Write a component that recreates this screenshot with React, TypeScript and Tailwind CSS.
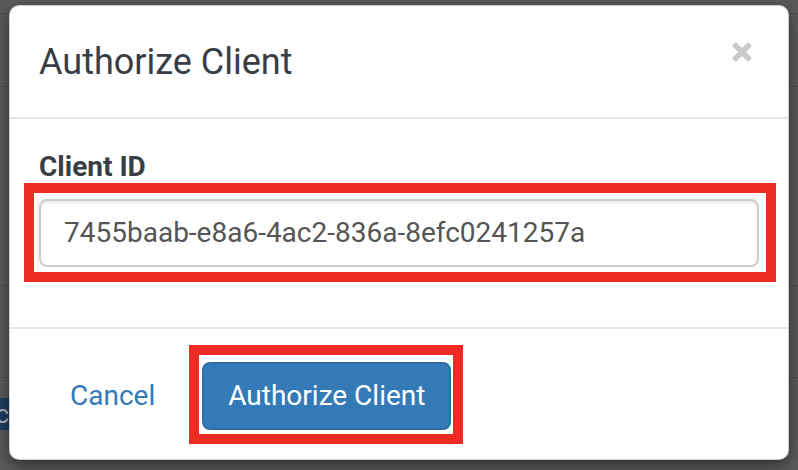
const font = { fontFamily: 'Roboto, "Liberation Sans", sans-serif' }

const BackgroundPage = () => (
  <div className="flex h-full flex-col">
    <div className="h-[14px] border-b border-[#4e4e4e]" />
    <div className="h-[73px] border-b border-[#4e4e4e]" />
    <div className="h-[199px] border-b border-[#4e4e4e]" />
    <div className="h-[92px] border-b border-[#4e4e4e]" />
    <div className="flex-1 pt-[20px]">
      <div className="flex h-[32px] w-[9px] items-center justify-end overflow-hidden whitespace-nowrap bg-[#1c3c5f] text-[26px] text-[#a9b8c8]">
        Authorize Public
      </div>
    </div>
  </div>
)

const CloseIcon = () => (
  <svg width="22" height="22" viewBox="0 0 22 22">
    <path d="M3 3 L19 19 M19 3 L3 19" stroke="#c9c9c9" strokeWidth="5.5" strokeLinecap="butt" />
  </svg>
)

const AuthorizeModal = () => (
  <div className="flex h-[455px] w-[780px] flex-col rounded-[10px] border border-black/20 bg-white shadow-[0_5px_15px_rgba(0,0,0,0.5)]">
    <div className="flex h-[113px] justify-between border-b-2 border-[#e5e5e5] pl-[29px] pr-[35px]">
      <h4 className="self-center text-[36px] leading-none text-[#383e45]">Authorize Client</h4>
      <button className="mt-[35px] self-start">
        <CloseIcon />
      </button>
    </div>

    <div className="border-b-2 border-[#e5e5e5] px-[29px] pb-[60px] pt-[28px]">
      <label className="block text-[28px] font-bold leading-[40px] text-[#383e45]">Client ID</label>
      <div className="mt-[12px] flex h-[68px] items-center rounded-[8px] border-2 border-[#cccccc] px-[23px] text-[28px] text-[#555555] shadow-[inset_0_2px_2px_rgba(0,0,0,0.075)]">
        7455baab-e8a6-4ac2-836a-8efc0241257a
      </div>
    </div>

    <div className="flex items-start pl-[60px] pt-[33px]">
      <button className="flex h-[68px] items-center text-[28px] text-[#337ab7]">Cancel</button>
      <button className="ml-[47px] flex h-[68px] items-center rounded-[8px] border-2 border-[#2e6da4] bg-[#337ab7] px-[24px] text-[28px] text-white">
        Authorize Client
      </button>
    </div>
  </div>
)

export default function App() {
  return (
    <div className="relative h-[470px] w-[798px] overflow-hidden bg-[#5b5b5b]" style={font}>
      <BackgroundPage />
      <div className="absolute inset-0 pl-[9px] pt-[5px]">
        <AuthorizeModal />
      </div>
      {/* red annotation boxes */}
      <div className="absolute left-[24px] top-[183px] h-[99px] w-[752px] border-[10px] border-[#ee2b22]" />
      <div className="absolute left-[189px] top-[345px] h-[99px] w-[274px] border-[10px] border-[#ee2b22]" />
    </div>
  )
}
